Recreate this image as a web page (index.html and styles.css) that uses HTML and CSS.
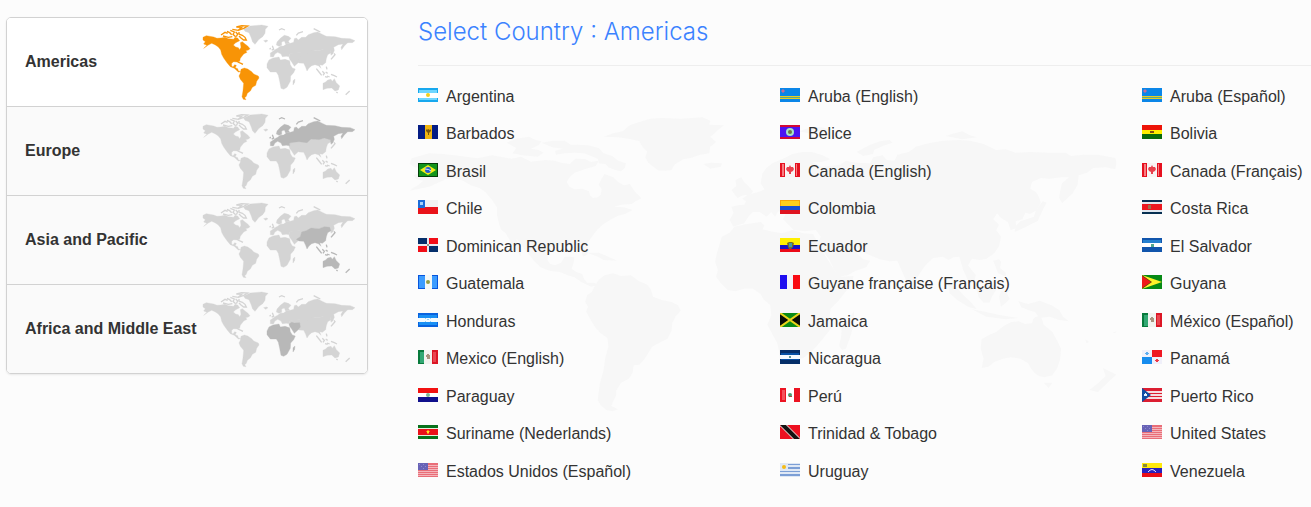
FILE: index.html
```html
<!DOCTYPE html>
<html lang="en">
<head>
<meta charset="utf-8">
<title>Select Country</title>
<link rel="stylesheet" href="styles.css">
</head>
<body>
<svg class="sprite" aria-hidden="true">
  <defs>
    <!-- Continents, 3 units per pixel -->
    <g id="north-america">
      <path d="M24 58L34 53L56 57L66 61L78 60L90 58L100 62L116 64L120 58L128 60L134 68L122 74L115 81L122 87L130 89L134 95L138 88L136 74L142 71L150 78L158 84L165 92L160 96L152 98L156 103L146 108L136 121L134 130L128 132L116 131L110 136L110 144L114 147L119 140L124 142L121 149L128 152L130 158L137 161L130 162L118 151L106 146L96 134L86 120L80 109L77 96L70 87L60 80L50 76L40 81L26 91L36 82L26 78L31 71L24 66Z"/>
      <path class="coast" d="M78 51L90 43L98 46M84 54L100 58L112 56M96 40L104 44L110 50M106 37L118 42L114 49L122 56M122 42L128 48L124 56M112 34L130 37L146 31L158 24L140 23L124 27L140 28L128 38M132 42L132 48L142 52L150 58L154 66L146 66L138 60L132 54M128 132L138 136L144 139"/>
    </g>
    <path id="south-america" d="M138 154L148 150L158 153L170 161L176 168L190 174L192 180L185 190L182 202L172 208L166 219L157 226L154 235L149 239L153 245L145 244L141 236L144 218L146 196L136 184L132 174L136 166Z"/>
    <path id="greenland" d="M146 33L166 24L200 21L219 25L211 34L210 46L203 56L192 64L186 71L180 79L173 72L168 58L162 44L150 40ZM206 68L214 66L219 68L212 73Z"/>
    <g id="europe">
      <path d="M234 100L240 95L248 91L256 85L266 84L274 78L286 76L296 73L298 62L304 60L310 66L320 58L332 58L340 50L356 44L368 42L384 50L394 55L420 56L440 61L466 62L480 68L472 74L458 74L448 84L440 95L438 88L444 78L430 80L416 88L418 97L414 107L408 112L406 98L388 93L372 98L348 96L336 107L312 104L296 106L284 108L284 116L274 115L262 116L258 108L248 103L240 108L235 117L226 116L226 105Z"/>
      <path d="M244 81L246 72L256 61L268 52L280 55L288 61L280 70L284 76L272 78L268 69L260 72L260 82L252 85Z"/>
      <path class="coast" d="M230 96L236 94L232 83M227 90L224 94M252 36L260 32L270 36M304 52L310 45L324 41M356 32L368 38L376 42"/>
    </g>
    <path id="central-asia" d="M284 107L296 104L312 103L336 105L350 94L360 100L335 118L316 126L300 119L284 119Z"/>
    <path id="middle-east" d="M282 117L290 112L298 114L314 113L316 126L308 136L298 145L290 132L284 124Z"/>
    <g id="asia-pacific">
      <path d="M304 130L316 122L320 108L334 104L348 96L372 98L388 92L404 94L408 104L398 110L394 122L392 134L382 142L374 140L378 151L370 143L360 140L350 143L342 150L336 159L332 148L326 136L312 135Z"/>
      <path d="M384 196L392 192L398 186L408 184L412 190L418 182L424 194L434 204L430 216L420 219L410 210L396 211L384 215Z"/>
      <path class="coast" d="M408 124L414 117L420 110L417 106M394 146L396 154M364 152L372 162L380 172M382 160L388 166L384 172M392 162L398 166M396 174L404 177M408 169L418 173L426 177M424 222L428 225M452 230L464 219M390 176L398 178"/>
    </g>
    <g id="africa">
      <path d="M222 126L234 120L252 117L256 126L270 124L284 128L286 140L292 150L301 153L296 164L287 174L286 190L276 208L266 214L258 211L254 190L250 172L244 162L226 162L216 149L216 138Z"/>
      <path d="M294 188L300 183L299 193L294 201Z"/>
    </g>

    <!-- Flags, one unit per pixel -->
    <symbol id="ar" viewBox="0 0 20 14"><path fill="#17a8ee" d="M0 0h20v14H0z"/><path fill="#6fd6ff" d="M1 2h18v3H1zM1 10h18v2H1z"/><path fill="#fff" d="M0 5h20v5H0z"/><circle cx="10" cy="7" r="2" fill="#f4cf1b"/></symbol>
    <symbol id="aw" viewBox="0 0 20 14"><path fill="#0b86e8" d="M0 0h20v14H0z"/><path fill="#e9ce21" d="M0 8h20v1H0zM0 10h20v1H0z"/><path fill="#55a898" d="M0 9h20v1H0z"/><path fill="#c66a9a" d="M3 1l1 1 1 1-1 1-1 1-1-1-1-1 1-1z"/></symbol>
    <symbol id="bb" viewBox="0 0 20 14"><path fill="#041c84" d="M0 0h20v14H0z"/><path fill="#f0b410" d="M7 0h7v14H7z"/><path fill="#7b560a" d="M8 4l1 1 1-1 2 1 1-1v2l-2 2v2h-1V8L8 6z"/></symbol>
    <symbol id="bz" viewBox="0 0 20 14"><path fill="#4a14f2" d="M0 0h20v14H0z"/><path fill="#d20836" d="M0 0h20v2H0zM0 12h20v2H0z"/><circle cx="10" cy="7" r="4" fill="#a7e3c5"/><circle cx="10" cy="7" r="2" fill="#6b7844"/></symbol>
    <symbol id="bo" viewBox="0 0 20 14"><path fill="#ed1408" d="M0 0h20v5H0z"/><path fill="#ffef00" d="M0 5h20v4H0z"/><path fill="#086a0c" d="M0 9h20v5H0z"/><path fill="#814f13" d="M8 6h4v2H8z"/></symbol>
    <symbol id="br" viewBox="0 0 20 14"><path fill="#053d0a" d="M0 0h20v14H0z"/><path fill="#13941b" d="M1 1h18v12H1z"/><path fill="#f4ec1b" d="M10 2l8 5-8 5-8-5z"/><circle cx="10" cy="7" r="3" fill="#245ccc"/><path d="M7 6q4 0 6 2" fill="none" stroke="#d7e9fa"/></symbol>
    <symbol id="ca" viewBox="0 0 20 14"><path fill="#f8f4f4" d="M0 0h20v14H0z"/><path fill="#e6101f" d="M0 0h5v14H0zM15 0h5v14h-5z"/><path fill="#f67d81" d="M2 1h2v12H2zM16 1h1v12h-1z"/><path fill="#e8404c" d="M10 2l1 2 2 0 1 2-1 2-2 1v2H9V9L7 8 6 6l1-2h2z"/></symbol>
    <symbol id="cl" viewBox="0 0 20 14"><path fill="#f2f2f2" d="M0 0h20v7H0z"/><path fill="#e9131a" d="M0 7h20v7H0z"/><path fill="#1d6cd8" d="M0 0h7v8H0z"/><path fill="#a8d2fa" d="M2 2h3v3H2z"/></symbol>
    <symbol id="co" viewBox="0 0 20 14"><path fill="#f9a708" d="M0 0h20v6H0z"/><path fill="#ffcf1d" d="M1 1h18v5H1z"/><path fill="#1950d0" d="M0 6h20v4H0z"/><path fill="#df1420" d="M0 10h20v4H0z"/></symbol>
    <symbol id="cr" viewBox="0 0 20 14"><path fill="#073052" d="M0 0h20v14H0z"/><path fill="#e2e8f0" d="M0 2h20v10H0z"/><path fill="#eb1820" d="M0 4h20v6H0z"/><path fill="#a06e4b" d="M6 5h3v4H6z"/></symbol>
    <symbol id="do" viewBox="0 0 20 14"><path fill="#e8eaef" d="M0 0h20v14H0z"/><path fill="#052f6b" d="M0 0h9v6H0zM11 8h9v6h-9z"/><path fill="#f10d17" d="M11 0h9v6h-9zM0 8h9v6H0z"/><path fill="#8d9a8d" d="M9 6h2v2H9z"/></symbol>
    <symbol id="ec" viewBox="0 0 20 14"><path fill="#fff000" d="M0 0h20v7H0z"/><path fill="#1712c5" d="M0 7h20v4H0z"/><path fill="#eb0a18" d="M0 11h20v3H0z"/><path fill="#746c2b" d="M7 5l2-1h3l2 1-1 4-2 2H9L8 9z"/><path fill="#459ba1" d="M9 5h3v4H9z"/></symbol>
    <symbol id="sv" viewBox="0 0 20 14"><path fill="#1155ac" d="M0 0h20v14H0z"/><path fill="#2580cf" d="M1 2h18v3H1z"/><path fill="#fff" d="M0 5h20v4H0z"/><path fill="#53a88c" d="M9 6h3v3H9z"/></symbol>
    <symbol id="gt" viewBox="0 0 20 14"><path fill="#0755dd" d="M0 0h20v14H0z"/><path fill="#3c9cff" d="M1 1h6v12H1zM14 1h5v12h-5z"/><path fill="#f5f8f6" d="M7 0h7v14H7z"/><circle cx="10" cy="7" r="2" fill="#939c46"/></symbol>
    <symbol id="gf" viewBox="0 0 20 14"><path fill="#1f0df0" d="M0 0h7v14H0z"/><path fill="#f5f2fa" d="M7 0h6v14H7z"/><path fill="#f90a14" d="M13 0h7v14h-7z"/></symbol>
    <symbol id="gy" viewBox="0 0 20 14"><path fill="#078a15" d="M0 0h20v14H0z"/><path fill="#fff12a" d="M0 0l20 7-20 7z"/><path fill="#5a4908" d="M0 0l10 7-10 7z"/><path fill="#f01818" d="M0 1l9 6-9 6z"/></symbol>
    <symbol id="hn" viewBox="0 0 20 14"><path fill="#0963df" d="M0 0h20v14H0z"/><path fill="#1a90f4" d="M1 2h18v3H1zM1 9h18v3H1z"/><path fill="#f4fbff" d="M0 5h20v4H0z"/><path fill="#9ad2f4" d="M7 5h1v1H7zM12 5h1v1h-1zM9 6h2v1H9zM7 8h1v1H7zM12 8h1v1h-1z"/></symbol>
    <symbol id="jm" viewBox="0 0 20 14"><path fill="#0a8b16" d="M0 0h20v14H0z"/><path fill="#090b04" d="M0 1l9 6-9 6zM20 1l-9 6 9 6z"/><path d="M0 0l20 14M20 0L0 14" stroke="#ead31a" stroke-width="2"/></symbol>
    <symbol id="mx" viewBox="0 0 20 14"><path fill="#087a3c" d="M0 0h7v14H0z"/><path fill="#32a873" d="M2 2h4v11H2z"/><path fill="#f2f3ef" d="M6 0h8v14H6z"/><path fill="#dc1625" d="M14 0h6v14h-6z"/><path fill="#ea4650" d="M15 2h3v10h-3z"/><path fill="#a99580" d="M9 4h2v1h1v4H9V7H8V5h1z"/></symbol>
    <symbol id="ni" viewBox="0 0 20 14"><path fill="#052e68" d="M0 0h20v14H0z"/><path fill="#0750a4" d="M1 3h18v2H1zM1 9h18v1H1z"/><path fill="#f5faff" d="M0 5h20v4H0z"/><path fill="#5f989a" d="M9 6h2v2H9z"/></symbol>
    <symbol id="pa" viewBox="0 0 20 14"><path fill="#f0f0fa" d="M0 0h20v14H0z"/><path fill="#ef1823" d="M10 0h10v7H10z"/><path fill="#168cee" d="M0 7h10v7H0z"/><path fill="#5eadf0" d="M4 2h2v1h1v1H6v1H4V4H3V3h1z"/><path fill="#ef3846" d="M14 9h2v1h1v1h-1v1h-2v-1h-1v-1h1z"/></symbol>
    <symbol id="py" viewBox="0 0 20 14"><path fill="#f21111" d="M0 0h20v5H0z"/><path fill="#fff" d="M0 5h20v4H0z"/><path fill="#10108c" d="M0 9h20v5H0z"/><circle cx="10" cy="7" r="2" fill="#7bb894"/></symbol>
    <symbol id="pe" viewBox="0 0 20 14"><path fill="#ec1422" d="M0 0h20v14H0z"/><path fill="#f3545d" d="M2 2h3v10H2z"/><path fill="#fff" d="M6 0h8v14H6z"/><circle cx="10" cy="7" r="2" fill="#4c9a71"/><path fill="#a74b45" d="M9 8h3v1H9z"/></symbol>
    <symbol id="pr" viewBox="0 0 20 14"><path fill="#dc1e31" d="M0 0h20v14H0z"/><path fill="#f5dde0" d="M0 3h20v2H0zM0 6h20v2H0zM0 9h20v2H0z"/><path fill="#104da4" d="M0 0l9 7-9 7z"/><path fill="#e6f4ff" d="M3 5h1v1h1v2H2V6h1z"/></symbol>
    <symbol id="sr" viewBox="0 0 20 14"><path fill="#08721c" d="M0 0h20v14H0z"/><path fill="#e4f2dd" d="M0 3h20v8H0z"/><path fill="#ea111a" d="M0 4h20v6H0z"/><path fill="#ffe020" d="M10 5l1 1h1l-1 1v2l-1-1-1 1V7L8 6h1z"/></symbol>
    <symbol id="tt" viewBox="0 0 20 14"><path fill="#ed1020" d="M0 0h20v14H0z"/><path d="M2 -1l16 16" stroke="#dcb8b8" stroke-width="6"/><path d="M2 -1l16 16" stroke="#111" stroke-width="4"/></symbol>
    <symbol id="us" viewBox="0 0 20 14"><path fill="#e96e78" d="M0 0h20v14H0z"/><path fill="#f4b5bb" d="M0 2h20v1H0zM0 4h20v1H0zM0 6h20v1H0zM0 8h20v1H0zM0 10h20v1H0zM0 12h20v1H0z"/><path fill="#6863b7" d="M0 0h10v7H0z"/><path fill="#8f8acd" d="M1 1h1v1H1zM3 3h1v1H3zM5 1h1v1H5zM7 3h1v1H7zM5 5h1v1H5z"/></symbol>
    <symbol id="uy" viewBox="0 0 20 14"><path fill="#dfe8f5" d="M0 0h20v14H0z"/><path fill="#7c9fd6" d="M8 1h12v1H8zM8 4h12v2H8zM0 8h20v1H0zM0 11h20v2H0z"/><circle cx="4" cy="4" r="2" fill="#f5bb17"/></symbol>
    <symbol id="ve" viewBox="0 0 20 14"><path fill="#ffe90d" d="M0 0h20v5H0z"/><path fill="#2920bd" d="M0 5h20v5H0z"/><path fill="#ea0e16" d="M0 10h20v4H0z"/><path d="M6 9q4-5 8 0" fill="none" stroke="#e9ebff" stroke-width="1"/><path fill="#88893a" d="M1 1h4v3H1z"/></symbol>
  </defs>
</svg>

<div class="page">
  <nav class="regions" aria-label="Regions">
    <a class="region region--current" href="#americas" aria-current="page">Americas
      <svg class="minimap" viewBox="18 15 468 237" aria-hidden="true"><use href="#central-asia"/><use href="#middle-east"/><use href="#asia-pacific"/><use href="#europe"/><use href="#africa"/><use href="#greenland"/><use class="active" href="#north-america"/><use class="active" href="#south-america"/></svg>
    </a>
    <a class="region" href="#europe-countries">Europe
      <svg class="minimap" viewBox="18 15 468 237" aria-hidden="true"><use href="#central-asia"/><use href="#middle-east"/><use href="#asia-pacific"/><use class="active" href="#europe"/><use href="#africa"/><use href="#greenland"/><use href="#north-america"/><use href="#south-america"/></svg>
    </a>
    <a class="region" href="#asia-pacific-countries">Asia and Pacific
      <svg class="minimap" viewBox="18 15 468 237" aria-hidden="true"><use href="#central-asia"/><use href="#middle-east"/><use href="#europe"/><use class="active" href="#asia-pacific"/><use href="#africa"/><use href="#greenland"/><use href="#north-america"/><use href="#south-america"/></svg>
    </a>
    <a class="region" href="#africa-countries">Africa and Middle East
      <svg class="minimap" viewBox="18 15 468 237" aria-hidden="true"><use href="#central-asia"/><use href="#asia-pacific"/><use href="#europe"/><use class="active" href="#middle-east"/><use class="active" href="#africa"/><use href="#greenland"/><use href="#north-america"/><use href="#south-america"/></svg>
    </a>
  </nav>

  <main class="countries" id="americas">
    <h1 class="title">Select Country : Americas</h1>
    <svg class="worldmap" viewBox="0 0 1568 1020" preserveAspectRatio="none" aria-hidden="true">
      <path d="M24 205L60 190L90 192L120 197L160 205L190 196L230 206L250 200L270 215L300 210L320 212L332 218L350 222L362 206L382 207L394 216L410 212L404 228L384 236L360 248L350 262L344 276L350 290L360 298L376 296L390 304L392 316L398 324L408 322L414 314L416 298L410 284L416 266L422 252L440 262L450 276L462 286L474 282L484 304L498 325L486 334L478 342L456 344L442 350L462 352L480 360L464 372L450 377L436 388L420 402L408 418L402 428L396 440L390 452L384 466L390 480L386 494L378 500L374 484L370 466L356 464L344 458L326 466L314 470L306 490L304 510L310 522L320 526L332 518L340 500L350 500L360 502L358 520L354 536L364 546L376 552L380 568L386 578L400 578L410 584L394 590L374 576L360 562L346 556L330 546L308 542L290 532L276 512L270 500L258 480L250 462L240 446L246 474L250 500L236 474L226 450L218 430L208 418L204 400L200 376L200 352L190 330L176 306L164 294L146 286L130 272L112 264L94 268L82 276L60 290L20 302L38 284L48 272L34 268L28 256L42 248L48 236L30 232L20 222Z"/>
      <path d="M220 158L240 146L266 140L280 150L292 154L286 166L270 176L286 180L296 188L284 200L268 198L252 196L232 190L240 174ZM292 158L316 152L340 152L352 164L366 164L388 166L410 174L420 190L438 198L450 212L466 220L464 234L456 244L444 240L430 232L424 222L410 220L408 206L398 200L380 190L360 188L340 190L322 194L320 182L336 176L314 172ZM386 488L410 488L430 500L448 512L420 510L408 500ZM22 296L50 282L38 296Z"/>
      <path d="M410 570L422 556L440 550L456 558L476 556L492 572L510 584L518 600L522 620L540 630L560 636L574 646L579 662L568 680L562 698L560 722L552 746L538 756L520 770L512 790L504 808L494 824L482 826L480 848L472 866L456 878L446 902L446 916L440 934L436 948L450 958L438 964L426 960L414 946L408 930L410 906L412 884L420 840L424 800L430 770L428 744L414 730L402 710L392 686L384 664L388 650L382 636L386 616L396 606L402 588Z"/>
      <path d="M420 140L440 130L460 124L474 106L494 96L516 86L540 84L580 86L624 82L640 92L638 104L668 106L658 118L650 128L640 140L652 156L640 170L638 190L620 194L600 204L584 208L566 224L560 240L548 242L534 242L524 232L512 218L506 202L510 184L500 170L494 154L478 148L450 142ZM626 222L642 218L664 220L662 230L640 236Z"/>
      <path d="M680 390L688 370L684 350L696 346L710 344L714 334L706 326L716 316L730 310L744 304L752 298L744 280L748 250L756 234L768 220L790 206L810 192L830 186L850 186L872 196L888 208L870 216L850 216L870 230L908 224L920 212L940 218L970 220L976 202L996 196L1004 210L1020 212L1026 194L1050 186L1064 170L1090 160L1120 152L1154 150L1176 152L1204 162L1230 180L1250 178L1270 188L1300 186L1340 188L1374 188L1384 198L1410 194L1440 194L1476 204L1478 218L1476 238L1456 232L1430 234L1418 248L1400 256L1398 284L1388 310L1366 340L1360 324L1362 302L1366 280L1380 262L1364 262L1340 266L1322 264L1304 276L1300 296L1312 306L1318 320L1322 338L1314 360L1300 372L1290 368L1284 388L1270 394L1272 414L1260 420L1254 396L1240 384L1232 370L1224 388L1236 404L1230 420L1240 440L1236 468L1226 490L1210 506L1196 510L1180 506L1172 526L1188 556L1184 580L1172 572L1162 540L1154 500L1142 502L1132 510L1120 500L1100 504L1084 526L1068 560L1060 596L1048 582L1038 552L1026 512L1010 514L990 508L970 496L950 484L940 470L942 490L956 508L970 512L962 532L940 542L924 556L904 560L896 540L886 510L862 460L868 440L858 420L836 424L812 420L800 402L790 388L796 372L780 364L774 380L766 366L756 380L742 366L728 366L720 378L710 400L688 410Z"/>
      <path d="M664 440L680 428L690 410L716 402L744 396L752 406L748 418L764 424L788 430L810 420L832 430L852 432L862 458L876 494L892 530L900 550L910 560L936 558L932 580L920 604L904 634L888 656L886 686L890 714L876 740L862 764L850 784L832 804L812 810L796 812L784 806L782 784L778 758L768 732L758 704L766 676L764 646L750 628L744 612L728 596L710 596L692 604L676 600L662 580L652 560L656 540L650 516L654 488L660 460ZM912 700L926 690L936 664L938 694L930 736L920 776L912 780L906 768L910 740Z"/>
      <path d="M1200 748L1216 734L1230 726L1240 714L1250 704L1262 696L1276 694L1290 702L1304 700L1306 688L1310 682L1322 676L1328 704L1346 726L1356 752L1364 776L1362 808L1356 834L1346 856L1330 862L1318 858L1310 850L1302 836L1296 820L1280 806L1260 802L1244 806L1226 816L1214 830L1200 834L1204 806L1198 776ZM1328 878L1346 878L1338 894ZM1422 900L1440 880L1456 858L1450 834L1462 842L1478 854L1464 872L1440 906ZM1276 634L1296 642L1320 632L1344 646L1360 660L1368 680L1380 694L1360 690L1340 680L1320 684L1310 666L1300 662L1282 652ZM1188 592L1204 590L1216 574L1224 584L1230 600L1222 618L1216 638L1204 638L1194 622ZM1130 576L1150 596L1166 620L1180 640L1190 658L1172 650L1150 630L1134 610ZM1180 658L1210 666L1240 676L1276 684L1250 688L1210 680ZM1240 602L1260 600L1252 610L1258 626L1252 636L1240 650L1236 620ZM1224 512L1236 508L1240 516L1238 534L1250 548L1250 560L1234 550ZM1268 426L1270 408L1280 394L1296 386L1308 380L1312 360L1326 334L1334 338L1326 360L1316 392L1300 404L1290 412ZM684 300L694 288L692 270L704 262L710 276L720 290L728 304L724 314L708 316L696 324ZM942 186L968 166L990 154L1010 150L1016 158L996 168L978 180L976 192L956 198ZM824 124L850 110L870 112L890 120L870 126L850 132ZM1126 138L1144 130L1160 124L1176 136L1190 142L1160 148ZM1414 748L1422 756L1416 760ZM1470 728L1478 724L1476 730Z"/>
    </svg>
    <ul class="list">
      <li><a href="#ar"><svg class="flag"><use href="#ar"/></svg>Argentina</a></li>
      <li><a href="#aw"><svg class="flag"><use href="#aw"/></svg>Aruba (English)</a></li>
      <li><a href="#aw"><svg class="flag"><use href="#aw"/></svg>Aruba (Español)</a></li>
      <li><a href="#bb"><svg class="flag"><use href="#bb"/></svg>Barbados</a></li>
      <li><a href="#bz"><svg class="flag"><use href="#bz"/></svg>Belice</a></li>
      <li><a href="#bo"><svg class="flag"><use href="#bo"/></svg>Bolivia</a></li>
      <li><a href="#br"><svg class="flag"><use href="#br"/></svg>Brasil</a></li>
      <li><a href="#ca"><svg class="flag"><use href="#ca"/></svg>Canada (English)</a></li>
      <li><a href="#ca"><svg class="flag"><use href="#ca"/></svg>Canada (Français)</a></li>
      <li><a href="#cl"><svg class="flag"><use href="#cl"/></svg>Chile</a></li>
      <li><a href="#co"><svg class="flag"><use href="#co"/></svg>Colombia</a></li>
      <li><a href="#cr"><svg class="flag"><use href="#cr"/></svg>Costa Rica</a></li>
      <li><a href="#do"><svg class="flag"><use href="#do"/></svg>Dominican Republic</a></li>
      <li><a href="#ec"><svg class="flag"><use href="#ec"/></svg>Ecuador</a></li>
      <li><a href="#sv"><svg class="flag"><use href="#sv"/></svg>El Salvador</a></li>
      <li><a href="#gt"><svg class="flag"><use href="#gt"/></svg>Guatemala</a></li>
      <li><a href="#gf"><svg class="flag"><use href="#gf"/></svg>Guyane française (Français)</a></li>
      <li><a href="#gy"><svg class="flag"><use href="#gy"/></svg>Guyana</a></li>
      <li><a href="#hn"><svg class="flag"><use href="#hn"/></svg>Honduras</a></li>
      <li><a href="#jm"><svg class="flag"><use href="#jm"/></svg>Jamaica</a></li>
      <li><a href="#mx"><svg class="flag"><use href="#mx"/></svg>México (Español)</a></li>
      <li><a href="#mx"><svg class="flag"><use href="#mx"/></svg>Mexico (English)</a></li>
      <li><a href="#ni"><svg class="flag"><use href="#ni"/></svg>Nicaragua</a></li>
      <li><a href="#pa"><svg class="flag"><use href="#pa"/></svg>Panamá</a></li>
      <li><a href="#py"><svg class="flag"><use href="#py"/></svg>Paraguay</a></li>
      <li><a href="#pe"><svg class="flag"><use href="#pe"/></svg>Perú</a></li>
      <li><a href="#pr"><svg class="flag"><use href="#pr"/></svg>Puerto Rico</a></li>
      <li><a href="#sr"><svg class="flag"><use href="#sr"/></svg>Suriname (Nederlands)</a></li>
      <li><a href="#tt"><svg class="flag"><use href="#tt"/></svg>Trinidad &amp; Tobago</a></li>
      <li><a href="#us"><svg class="flag"><use href="#us"/></svg>United States</a></li>
      <li><a href="#us"><svg class="flag"><use href="#us"/></svg>Estados Unidos (Español)</a></li>
      <li><a href="#uy"><svg class="flag"><use href="#uy"/></svg>Uruguay</a></li>
      <li><a href="#ve"><svg class="flag"><use href="#ve"/></svg>Venezuela</a></li>
    </ul>
  </main>
</div>
</body>
</html>
```

FILE: styles.css
```css
* {
  box-sizing: border-box;
}

body {
  margin: 0;
  background: #fcfcfc;
  color: #333;
  font: 16px/24px "Liberation Sans", Arial, sans-serif;
}

a {
  color: inherit;
  text-decoration: none;
}

.sprite {
  display: none;
}

.coast {
  fill: none;
  stroke-width: 4px;
}

.page {
  display: flex;
  align-items: flex-start;
  gap: 50px;
  padding: 17px 0 0 6px;
}

.regions {
  flex: 0 0 362px;
  border: 1px solid #d2d2d2;
  border-radius: 5px;
  box-shadow: 0 1px 2px rgba(0, 0, 0, 0.08);
  overflow: hidden;
}

.region {
  display: flex;
  align-items: center;
  justify-content: space-between;
  min-height: 88px;
  padding: 0 10px 0 18px;
  background: #fafafa;
  font-weight: bold;
  white-space: nowrap;
}

.region + .region {
  min-height: 89px;
  border-top: 1px solid #d2d2d2;
}

.region--current {
  background: #fff;
}

.minimap {
  flex: none;
  width: 156px;
  height: 79px;
  margin-left: -10px;
  fill: #d4d4d4;
  stroke: #d4d4d4;
}

.minimap .active {
  fill: #b8b8b8;
  stroke: #b8b8b8;
}

.region--current .active {
  fill: #f89406;
  stroke: #f89406;
}

.countries {
  position: relative;
  flex: 1;
  min-width: 0;
}

.title {
  margin: 0;
  padding-bottom: 18px;
  border-bottom: 1px solid #eee;
  color: #3b82ff;
  font: 300 24px/30px Inter, sans-serif;
}

.worldmap {
  position: absolute;
  z-index: -1;
  top: 73px;
  left: -18px;
  width: 760px;
  height: 340px;
  fill: #f7f7f7;
}

.list {
  display: grid;
  grid-template-columns: 15fr 15fr 7fr;
  grid-auto-rows: 37px 38px;
  margin: 0;
  padding: 19px 0 0;
  list-style: none;
  white-space: nowrap;
}

.list li {
  min-width: 0;
}

.list a {
  display: inline-flex;
  align-items: center;
  gap: 8px;
}

.flag {
  width: 20px;
  height: 14px;
  margin-bottom: 4px;
}
```
